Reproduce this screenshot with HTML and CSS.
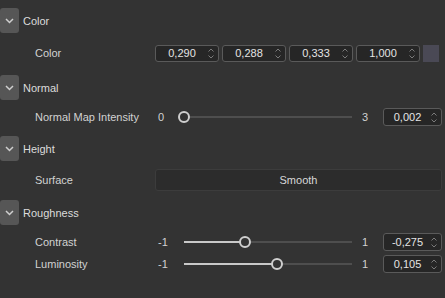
FILE: index.html
```html
<!DOCTYPE html>
<html lang="en">
<head>
  <meta charset="UTF-8">
  <meta name="viewport" content="width=device-width, initial-scale=1.0">
  <title>Material Properties</title>
  <link rel="stylesheet" href="styles.css">
</head>
<body>
  <div class="panel">

    <!-- Color -->
    <section class="group">
      <div class="group-head">
        <button class="toggle"><svg width="9" height="6" viewBox="0 0 9 6"><path d="M1 1 L4.5 4.5 L8 1" fill="none" stroke="#cfcfcf" stroke-width="1.5"/></svg></button>
        <span class="group-title">Color</span>
      </div>
      <div class="group-body">
        <div class="row row-color">
          <span class="label">Color</span>
          <div class="value">
            <div class="spin"><span class="spin-text">0,290</span><span class="arrows"><svg width="6" height="11" viewBox="0 0 6 11"><path d="M0.5 3.5 L3 1 L5.5 3.5 M0.5 7.5 L3 10 L5.5 7.5" fill="none" stroke="#7a7a7a" stroke-width="1"/></svg></span></div>
            <div class="spin"><span class="spin-text">0,288</span><span class="arrows"><svg width="6" height="11" viewBox="0 0 6 11"><path d="M0.5 3.5 L3 1 L5.5 3.5 M0.5 7.5 L3 10 L5.5 7.5" fill="none" stroke="#7a7a7a" stroke-width="1"/></svg></span></div>
            <div class="spin"><span class="spin-text">0,333</span><span class="arrows"><svg width="6" height="11" viewBox="0 0 6 11"><path d="M0.5 3.5 L3 1 L5.5 3.5 M0.5 7.5 L3 10 L5.5 7.5" fill="none" stroke="#7a7a7a" stroke-width="1"/></svg></span></div>
            <div class="spin"><span class="spin-text">1,000</span><span class="arrows"><svg width="6" height="11" viewBox="0 0 6 11"><path d="M0.5 3.5 L3 1 L5.5 3.5 M0.5 7.5 L3 10 L5.5 7.5" fill="none" stroke="#7a7a7a" stroke-width="1"/></svg></span></div>
            <div class="swatch"></div>
          </div>
        </div>
      </div>
    </section>

    <!-- Normal -->
    <section class="group">
      <div class="group-head">
        <button class="toggle"><svg width="9" height="6" viewBox="0 0 9 6"><path d="M1 1 L4.5 4.5 L8 1" fill="none" stroke="#cfcfcf" stroke-width="1.5"/></svg></button>
        <span class="group-title">Normal</span>
      </div>
      <div class="group-body">
        <div class="row">
          <span class="label">Normal Map Intensity</span>
          <div class="value">
            <span class="min">0</span>
            <div class="track"><div class="fill" style="width: 0.1%"></div><div class="knob" style="left: 0.1%"></div></div>
            <span class="max">3</span>
            <div class="spin spin-wide"><span class="spin-text">0,002</span><span class="arrows"><svg width="6" height="11" viewBox="0 0 6 11"><path d="M0.5 3.5 L3 1 L5.5 3.5 M0.5 7.5 L3 10 L5.5 7.5" fill="none" stroke="#7a7a7a" stroke-width="1"/></svg></span></div>
          </div>
        </div>
      </div>
    </section>

    <!-- Height -->
    <section class="group">
      <div class="group-head">
        <button class="toggle"><svg width="9" height="6" viewBox="0 0 9 6"><path d="M1 1 L4.5 4.5 L8 1" fill="none" stroke="#cfcfcf" stroke-width="1.5"/></svg></button>
        <span class="group-title">Height</span>
      </div>
      <div class="group-body">
        <div class="row row-choice">
          <span class="label">Surface</span>
          <div class="value">
            <button class="choice">Smooth</button>
          </div>
        </div>
      </div>
    </section>

    <!-- Roughness -->
    <section class="group">
      <div class="group-head">
        <button class="toggle"><svg width="9" height="6" viewBox="0 0 9 6"><path d="M1 1 L4.5 4.5 L8 1" fill="none" stroke="#cfcfcf" stroke-width="1.5"/></svg></button>
        <span class="group-title">Roughness</span>
      </div>
      <div class="group-body">
        <div class="row">
          <span class="label">Contrast</span>
          <div class="value">
            <span class="min">-1</span>
            <div class="track"><div class="fill" style="width: 36.25%"></div><div class="knob" style="left: 36.25%"></div></div>
            <span class="max">1</span>
            <div class="spin spin-wide"><span class="spin-text">-0,275</span><span class="arrows"><svg width="6" height="11" viewBox="0 0 6 11"><path d="M0.5 3.5 L3 1 L5.5 3.5 M0.5 7.5 L3 10 L5.5 7.5" fill="none" stroke="#7a7a7a" stroke-width="1"/></svg></span></div>
          </div>
        </div>
        <div class="row">
          <span class="label">Luminosity</span>
          <div class="value">
            <span class="min">-1</span>
            <div class="track"><div class="fill" style="width: 55.25%"></div><div class="knob" style="left: 55.25%"></div></div>
            <span class="max">1</span>
            <div class="spin spin-wide"><span class="spin-text">0,105</span><span class="arrows"><svg width="6" height="11" viewBox="0 0 6 11"><path d="M0.5 3.5 L3 1 L5.5 3.5 M0.5 7.5 L3 10 L5.5 7.5" fill="none" stroke="#7a7a7a" stroke-width="1"/></svg></span></div>
          </div>
        </div>
      </div>
    </section>

  </div>
</body>
</html>
```

FILE: styles.css
```css
/* Material properties panel */
html, body {
  margin: 0;
  height: 100%;
  background-color: #333333;
}
body {
  font-family: "Liberation Sans", Arial, sans-serif;
  font-size: 11px;
  color: #d2d2d2;
}
.panel {
  padding-top: 8px;
}
.group-head {
  display: flex;
  align-items: center;
  height: 25px;
}
.toggle {
  width: 19px;
  height: 25px;
  padding: 0;
  border: none;
  border-radius: 3px;
  background-color: #565656;
  display: flex;
  align-items: center;
  justify-content: center;
}
.group-title {
  margin-left: 4px;
  color: #dcdcdc;
}
.group-body {
  padding: 6px 0 8px;
}
.row {
  display: flex;
  align-items: center;
  height: 22px;
}
.row-color {
  height: 28px;
}
.row-choice {
  height: 25px;
}
.label {
  width: 120px;
  padding-left: 35px;
  flex-shrink: 0;
}
.value {
  flex: 1;
  display: flex;
  align-items: center;
  margin-right: 3px;
}
.spin {
  box-sizing: border-box;
  width: 64px;
  height: 17px;
  margin-right: 3px;
  border: 1px solid #5a5a5a;
  border-radius: 3px;
  background-color: #262626;
  display: flex;
  align-items: center;
  color: #e4e4e4;
}
.spin-text {
  flex: 1;
  text-align: center;
}
.arrows {
  width: 10px;
  display: flex;
  align-items: center;
}
.spin-wide {
  width: 59px;
  height: 18px;
  margin-right: 0;
}
.swatch {
  width: 16px;
  height: 17px;
  background-color: #4a4955;
}
.min {
  width: 29px;
  padding-left: 3px;
  box-sizing: border-box;
  flex-shrink: 0;
}
.max {
  width: 31px;
  padding-left: 10px;
  box-sizing: border-box;
  flex-shrink: 0;
}
.track {
  flex: 1;
  height: 2px;
  background-color: #4e4e4e;
  position: relative;
}
.fill {
  height: 2px;
  background-color: #c9c9c9;
}
.knob {
  position: absolute;
  top: -5px;
  width: 12px;
  height: 12px;
  margin-left: -6px;
  box-sizing: border-box;
  border: 2px solid #cfcfcf;
  border-radius: 50%;
  background-color: #333333;
}
.choice {
  flex: 1;
  height: 22px;
  border: 1px solid #3c3c3c;
  border-radius: 3px;
  background-color: #2c2c2c;
  font-family: inherit;
  font-size: 11px;
  color: #d8d8d8;
}
```
